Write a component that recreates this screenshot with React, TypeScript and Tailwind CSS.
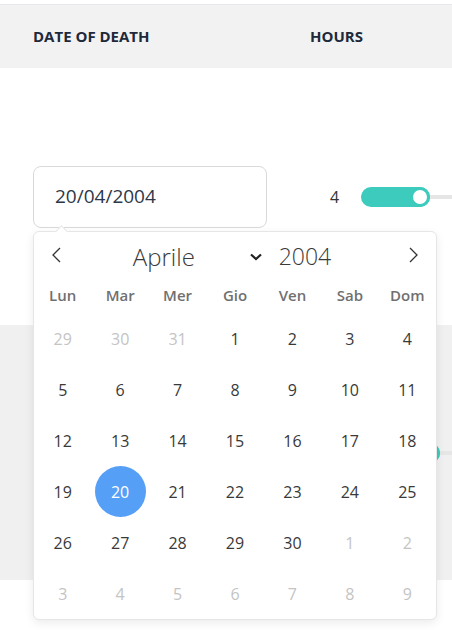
import React from "react";

function Slider({ fill }: { fill: number }) {
  return (
    <div className="relative flex h-[20px] w-[200px] shrink-0 items-center">
      <div className="absolute left-0 right-0 h-[4px] bg-[#e6e6e6]" />
      <div className="absolute left-0 h-[20px] rounded-full bg-[#3ccbbd]" style={{ width: fill }} />
      <div
        className="absolute h-[20px] w-[20px] rounded-full border-[3px] border-[#3ccbbd] bg-white"
        style={{ left: fill - 20 }}
      />
    </div>
  );
}

const weekdays = ["Lun", "Mar", "Mer", "Gio", "Ven", "Sab", "Dom"];

type Day = { n: number; muted?: boolean; selected?: boolean };

function buildDays(): Day[] {
  const d: Day[] = [];
  [29, 30, 31].forEach((n) => d.push({ n, muted: true }));
  for (let i = 1; i <= 30; i++) d.push({ n: i, selected: i === 20 });
  for (let i = 1; i <= 9; i++) d.push({ n: i, muted: true });
  return d;
}

export default function App() {
  const days = buildDays();
  return (
    <div
      className="relative h-[630px] w-[452px] overflow-hidden bg-white"
      style={{ fontFamily: '"Open Sans", "Noto Sans", sans-serif' }}
    >
      <div className="h-[4px]" />
      <div className="flex h-[64px] items-center border-t border-[#e5e7eb] bg-[#f2f2f2] pl-[33px] text-[15px] font-bold text-[#1e293b]">
        <div className="w-[277px] shrink-0">DATE OF DEATH</div>
        <div className="shrink-0">HOURS</div>
      </div>
      <div className="flex h-[257px] items-center pl-[33px]">
        <div className="flex h-[62px] w-[234px] shrink-0 items-center rounded-[8px] border border-[#d9d9d9] pl-[21px] text-[19px] text-[#2d3748]">
          20/04/2004
        </div>
        <div className="ml-[43px] flex shrink-0 items-center">
          <div className="w-[31px] shrink-0 pl-[20px] text-[16px] text-[#333]">4</div>
          <div className="ml-[20px] shrink-0">
            <Slider fill={69} />
          </div>
        </div>
      </div>
      <div className="flex h-[255px] items-center bg-[#f0f0f0] pl-[33px]">
        <div className="w-[234px] shrink-0" />
        <div className="ml-[43px] flex shrink-0 items-center">
          <div className="w-[31px] shrink-0" />
          <div className="ml-[20px] shrink-0">
            <Slider fill={79} />
          </div>
        </div>
      </div>

      <div className="absolute left-[33px] top-[231px] flex h-[389px] w-[404px] flex-col rounded-[6px] border border-[#e6e6e6] bg-white shadow-[0_3px_10px_rgba(0,0,0,0.08)]">
        <div className="absolute -top-[5px] left-[23px] h-[9px] w-[9px] rotate-45 border-l border-t border-[#e6e6e6] bg-white" />
        <div className="flex h-[46px] items-center px-[16px] pt-[3px]">
          <svg width="12" height="16" viewBox="0 0 12 16" className="mb-[3px] shrink-0">
            <path d="M10 1 L3 8 L10 15" fill="none" stroke="#333" strokeWidth="1.3" />
          </svg>
          <div className="flex flex-1 items-center justify-center pr-[6px]">
            <div className="flex w-[130px] items-center justify-between">
              <span className="text-[24px] font-light text-[#3a3a3a]">Aprile</span>
              <svg width="14" height="8" viewBox="0 0 14 8">
                <path d="M2 1.5 L7 6 L12 1.5" fill="none" stroke="#222" strokeWidth="2.2" />
              </svg>
            </div>
            <span className="ml-[16px] text-[23px] font-light text-[#3a3a3a]">2004</span>
          </div>
          <svg width="12" height="16" viewBox="0 0 12 16" className="mb-[3px] shrink-0">
            <path d="M2 1 L9 8 L2 15" fill="none" stroke="#333" strokeWidth="1.3" />
          </svg>
        </div>
        <div className="grid h-[35px] grid-cols-7 items-center">
          {weekdays.map((w) => (
            <div key={w} className="text-center text-[15px] font-semibold text-[#707070]">
              {w}
            </div>
          ))}
        </div>
        <div className="grid grid-cols-7">
          {days.map((d, i) => (
            <div key={i} className="flex h-[51px] items-center justify-center">
              {d.selected ? (
                <div className="flex h-[51px] w-[51px] items-center justify-center rounded-full bg-[#569ff7] text-[16px] text-white">
                  {d.n}
                </div>
              ) : (
                <span className={"text-[16px] " + (d.muted ? "text-[#c4c4c4]" : "text-[#393939]")}>{d.n}</span>
              )}
            </div>
          ))}
        </div>
      </div>
    </div>
  );
}
